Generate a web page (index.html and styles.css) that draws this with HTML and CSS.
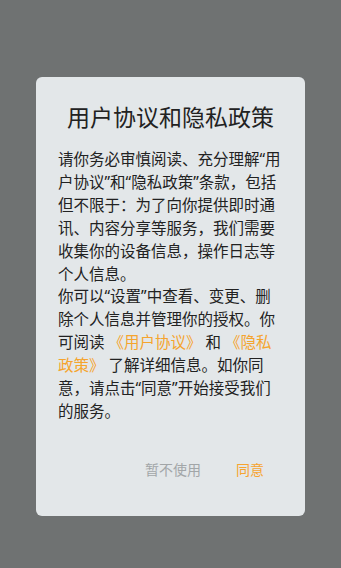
FILE: index.html
```html
<!DOCTYPE html>
<html lang="zh-CN">
<head>
    <meta charset="UTF-8">
    <meta name="viewport" content="width=device-width, initial-scale=1.0">
    <title>用户协议和隐私政策</title>
    <link rel="stylesheet" href="styles.css">
</head>
<body>
    <div class="overlay">
        <div class="dialog">
            <div class="dialog-title">用户协议和隐私政策</div>
            <div class="dialog-content">
                请你务必审慎阅读、充分理解“用户协议”和“隐私政策”条款，包括但不限于：为了向你提供即时通讯、内容分享等服务，我们需要收集你的设备信息，操作日志等个人信息。<br>你可以“设置”中查看、变更、删除个人信息并管理你的授权。你可阅读 <span class="link">《用户协议》</span> 和 <span class="link">《隐私政策》</span> 了解详细信息。如你同意，请点击“同意”开始接受我们的服务。
            </div>
            <div class="dialog-actions">
                <button class="btn btn-cancel">暂不使用</button>
                <button class="btn btn-ok">同意</button>
            </div>
        </div>
    </div>
</body>
</html>
```

FILE: styles.css
```css
body {
    margin: 0;
    padding: 0;
    background-color: #6f7272;
    font-family: "Noto Sans", "Noto Sans CJK SC", sans-serif;
}

.overlay {
    height: 568px;
    padding: 77px 36px 0;
    box-sizing: border-box;
}

.dialog {
    width: 269px;
    height: 439px;
    background-color: #e3e7e9;
    border-radius: 6px;
    padding-top: 25px;
    box-sizing: border-box;
}

.dialog-title {
    font-size: 23px;
    line-height: 30px;
    text-align: center;
    color: #222;
}

.dialog-content {
    width: 226px;
    margin-top: 16px;
    padding: 0 22px;
    font-size: 15.5px;
    line-height: 22.9px;
    color: #222;
}

.link {
    color: #f5a42e;
}

.dialog-actions {
    display: flex;
    justify-content: flex-end;
    margin-top: 37px;
    padding-right: 41px;
}

.btn {
    background: none;
    border: none;
    padding: 0;
    font-family: inherit;
    font-size: 14px;
    line-height: 20px;
    cursor: pointer;
}

.btn-cancel {
    color: #a2a6a8;
    margin-right: 35px;
}

.btn-ok {
    color: #f6a430;
}
```
